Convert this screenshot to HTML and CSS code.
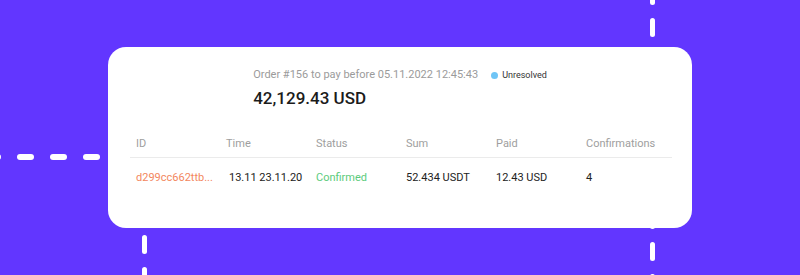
FILE: index.html
```html
<!DOCTYPE html>
<html lang="en">

<head>
    <meta charset="UTF-8">
    <meta name="viewport" content="width=device-width, initial-scale=1.0">
    <title>Order payment</title>
    <link rel="stylesheet" href="styles.css">
</head>

<body>
    <div class="stage">
        <!-- decorative dashed lines behind the card -->
        <div class="dash-h dash-left">
            <span></span><span></span><span></span><span></span>
        </div>
        <div class="dash-v dash-right">
            <span></span><span></span><span></span><span></span><span></span><span></span><span></span><span></span><span></span><span></span>
        </div>
        <div class="dash-v dash-bottom">
            <span></span><span></span>
        </div>

        <div class="card">
            <div class="head">
                <div class="order-line">
                    <span class="order-text">Order #156 to pay before 05.11.2022 12:45:43</span>
                    <span class="badge"><i class="dot"></i>Unresolved</span>
                </div>
                <div class="amount">42,129.43 USD</div>
            </div>

            <div class="table">
                <div class="row row-head">
                    <div class="cell">ID</div>
                    <div class="cell">Time</div>
                    <div class="cell">Status</div>
                    <div class="cell">Sum</div>
                    <div class="cell">Paid</div>
                    <div class="cell">Confirmations</div>
                </div>
                <div class="row">
                    <div class="cell id">d299cc662ttb...</div>
                    <div class="cell time">13.11 23.11.20</div>
                    <div class="cell confirmed">Confirmed</div>
                    <div class="cell">52.434 USDT</div>
                    <div class="cell">12.43 USD</div>
                    <div class="cell">4</div>
                </div>
            </div>
        </div>
    </div>
</body>

</html>
```

FILE: styles.css
```css
body {
    margin: 0;
    background-color: #6236ff;
    font-family: Roboto, "Liberation Sans", sans-serif;
    overflow: hidden;
}

.stage {
    position: relative;
    width: 800px;
    height: 275px;
    padding-top: 47px;
    box-sizing: border-box;
    overflow: hidden;
}

/* dashed decoration */
.dash-h,
.dash-v {
    position: absolute;
    display: flex;
}

.dash-h {
    gap: 16px;
}

.dash-h span {
    width: 17px;
    height: 6px;
    border-radius: 3px;
    background-color: #fff;
}

.dash-v {
    flex-direction: column;
    gap: 13px;
}

.dash-v span {
    width: 5px;
    height: 19px;
    flex-shrink: 0;
    border-radius: 3px;
    background-color: #fff;
}

.dash-left {
    left: -16px;
    top: 154px;
}

.dash-right {
    left: 650px;
    top: -14px;
    height: 289px;
    overflow: hidden;
}

.dash-bottom {
    left: 142px;
    top: 235px;
    height: 40px;
    overflow: hidden;
}

.card {
    position: relative;
    margin-left: 108px;
    width: 584px;
    height: 181px;
    padding-top: 21px;
    box-sizing: border-box;
    background-color: #fff;
    border-radius: 18px;
}

.head {
    width: fit-content;
    margin: 0 auto;
}

.order-line {
    display: flex;
    align-items: center;
    gap: 13px;
}

.order-text {
    font-size: 11px;
    line-height: 14px;
    color: #9b9b9b;
}

.badge {
    display: flex;
    align-items: center;
    gap: 4px;
    font-size: 9px;
    color: #333;
}

.dot {
    width: 7px;
    height: 7px;
    border-radius: 50%;
    background-color: #6fc5f6;
}

.amount {
    margin-top: 6px;
    font-size: 17px;
    line-height: 20px;
    font-weight: 500;
    color: #1b1b1b;
}

.table {
    margin: 29px 20px 0 22px;
}

.row {
    display: grid;
    grid-template-columns: repeat(6, 90px);
    font-size: 11px;
    line-height: 14px;
    color: #222;
}

.row-head {
    color: #9e9e9e;
    padding-bottom: 6px;
    border-bottom: 1px solid #ebebeb;
}

.row-head + .row {
    padding-top: 13px;
}

.cell {
    padding-left: 6px;
    white-space: nowrap;
}

.id {
    color: #f3875e;
}

.time {
    padding-left: 9px;
}

.confirmed {
    color: #5ccb7c;
}
```
